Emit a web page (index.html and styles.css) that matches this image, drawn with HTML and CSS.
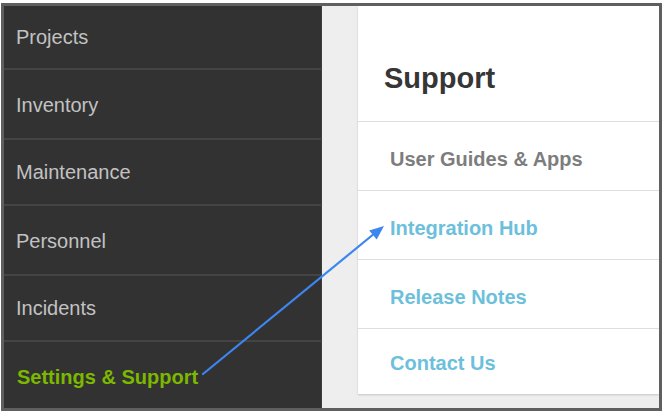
FILE: index.html
```html
<!DOCTYPE html>
<html>
<head>
<meta charset="utf-8">
<link rel="stylesheet" href="styles.css">
</head>
<body>
<div class="frame">
  <nav class="sidebar">
    <div class="nav-item first">Projects</div>
    <div class="nav-item tall">Inventory</div>
    <div class="nav-item">Maintenance</div>
    <div class="nav-item tall">Personnel</div>
    <div class="nav-item">Incidents</div>
    <div class="nav-item active">Settings &amp; Support</div>
  </nav>
  <main class="content">
    <section class="panel">
      <h1 class="panel-title">Support</h1>
      <div class="panel-item muted">User Guides &amp; Apps</div>
      <div class="panel-item link">Integration Hub</div>
      <div class="panel-item link">Release Notes</div>
      <div class="panel-item link last">Contact Us</div>
    </section>
  </main>
</div>
<svg class="annotation" width="667" height="415" viewBox="0 0 667 415">
  <line x1="203" y1="374" x2="375" y2="233" stroke="#3d86f0" stroke-width="2.2" stroke-linecap="round"/>
  <polygon points="384,226 376.7,239.6 369.2,230.4" fill="#3d86f0"/>
</svg>
</body>
</html>
```

FILE: styles.css
```css
* { box-sizing: border-box; }
html, body { margin: 0; padding: 0; }
body {
  width: 667px;
  height: 415px;
  background: #ffffff;
  font-family: "Liberation Sans", Arial, sans-serif;
  position: relative;
  overflow: hidden;
}
.frame {
  margin: 3px 0 0 1px;
  width: 661px;
  height: 408px;
  border: 3px solid #5f5f5f;
  display: flex;
  overflow: hidden;
  background: #eeeeee;
}
.sidebar {
  width: 318px;
  flex: none;
  background: #323232;
  border-right: 1px solid #3e3e3e;
  display: flex;
  flex-direction: column;
}
.nav-item {
  height: 66px;
  flex: none;
  border-bottom: 2px solid #444444;
  padding: 0 0 0 12px;
  display: flex;
  align-items: center;
  font-size: 20px;
  color: #c2c2c2;
}
.nav-item.first { height: 64px; }
.nav-item.tall { height: 70px; padding-top: 2px; }
.nav-item.active {
  flex: 1;
  border-bottom: none;
  color: #7cb800;
  font-weight: bold;
  padding: 4px 0 0 13px;
}
.content {
  flex: 1;
  padding: 0 0 14px 36px;
  display: flex;
}
.panel {
  flex: 1;
  background: #ffffff;
  box-shadow: 0 1px 2px rgba(0,0,0,0.18);
  display: flex;
  flex-direction: column;
}
.panel-title {
  margin: 0;
  height: 116px;
  padding: 56px 0 0 26px;
  line-height: 32px;
  font-size: 29px;
  font-weight: bold;
  color: #363636;
  border-bottom: 1px solid #dedede;
}
.panel-item {
  height: 69px;
  flex: none;
  padding: 6px 0 0 32px;
  display: flex;
  align-items: center;
  font-size: 20px;
  font-weight: bold;
  border-bottom: 1px solid #dedede;
}
.panel-item.last { border-bottom: none; flex: 1; padding-top: 4px; }
.muted { color: #7d7d7d; }
.link { color: #6cc0dc; }
.annotation {
  position: absolute;
  top: 0;
  left: 0;
  pointer-events: none;
}
```
